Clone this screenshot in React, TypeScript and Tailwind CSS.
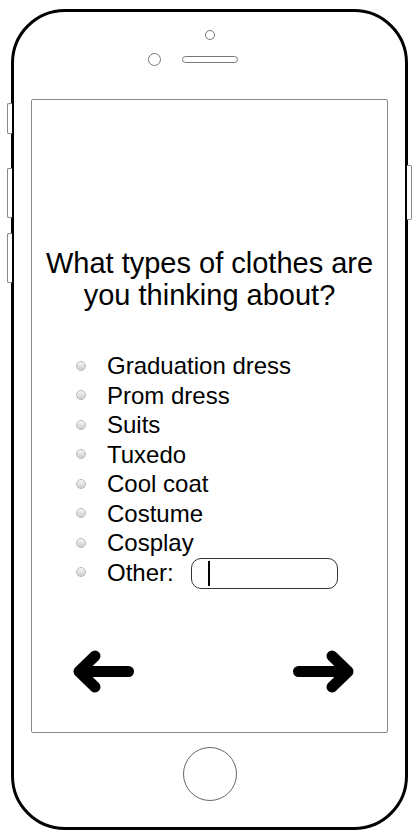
const options = [
  'Graduation dress',
  'Prom dress',
  'Suits',
  'Tuxedo',
  'Cool coat',
  'Costume',
  'Cosplay',
];

function Radio() {
  return (
    <span className="w-[10px] h-[10px] shrink-0 rounded-full border border-[#b9b9b9] bg-linear-to-b from-[#f7f7f7] to-[#cdcdcd]" />
  );
}

function Arrow({ flip }: { flip?: boolean }) {
  return (
    <svg
      width="64"
      height="48"
      viewBox="0 0 64 48"
      className={flip ? 'scale-x-[-1]' : ''}
    >
      <path
        d="M57.5 23.5 H8 M24 8 L8 23.5 L24 39"
        fill="none"
        stroke="#000"
        strokeWidth="11"
        strokeLinecap="round"
        strokeLinejoin="round"
      />
    </svg>
  );
}

export default function App() {
  return (
    <div className="w-[420px] h-[838px] bg-white pt-[9px] pl-[11px] font-['Liberation_Sans',Arial,sans-serif] text-black">
      <div className="relative w-[397px] h-[821px] border-[3px] border-black rounded-[54px] flex flex-col">
        {/* side buttons */}
        <span className="absolute left-[-7px] top-[91px] w-[5px] h-[31px] border border-[#888] border-r-0 rounded-l-[2px] bg-white" />
        <span className="absolute left-[-7px] top-[156px] w-[5px] h-[50px] border border-[#888] border-r-0 rounded-l-[2px] bg-white" />
        <span className="absolute left-[-7px] top-[221px] w-[5px] h-[50px] border border-[#888] border-r-0 rounded-l-[2px] bg-white" />
        <span className="absolute right-[-7px] top-[153px] w-[5px] h-[55px] border border-[#888] border-l-0 rounded-r-[2px] bg-white" />

        {/* top: camera + speaker */}
        <div className="h-[87px] shrink-0 flex flex-col items-center pt-[18px]">
          <span className="w-[10px] h-[10px] rounded-full border-[1.5px] border-[#777]" />
          <div className="mt-[13px] flex items-center gap-[21px]">
            <span className="w-[13px] h-[13px] rounded-full border-[1.5px] border-[#777]" />
            <span className="w-[56px] h-[7px] rounded-full border-[1.5px] border-[#777]" />
            <span className="w-[13px] h-[13px]" />
          </div>
        </div>

        {/* screen */}
        <div className="mx-[17px] h-[634px] shrink-0 border border-[#888] rounded-[2px] flex flex-col">
          <h1 className="pt-[147px] text-center text-[29px] leading-[32px] font-normal">
            What types of clothes are
            <br />
            you thinking about?
          </h1>

          <ul className="mt-[40px] pl-[44px] text-[24px] leading-[29.5px]">
            {options.map((o) => (
              <li key={o} className="flex items-center gap-[21px]">
                <Radio />
                <span>{o}</span>
              </li>
            ))}
            <li className="flex items-start">
              <span className="h-[29.5px] flex items-center">
                <Radio />
              </span>
              <span className="ml-[21px]">Other:</span>
              <div className="ml-[17px] w-[147px] h-[31px] border-[1.5px] border-[#333] rounded-[10px] flex items-center pl-[16px]">
                <span className="w-[2px] h-[25px] bg-black" />
              </div>
            </li>
          </ul>

          <div className="mt-auto flex justify-between pl-[39px] pr-[31px] pb-[36px]">
            <Arrow />
            <Arrow flip />
          </div>
        </div>

        {/* home button */}
        <div className="flex-1 flex justify-center pt-[14px]">
          <span className="w-[54px] h-[54px] rounded-full border-[1.5px] border-[#666]" />
        </div>
      </div>
    </div>
  );
}
